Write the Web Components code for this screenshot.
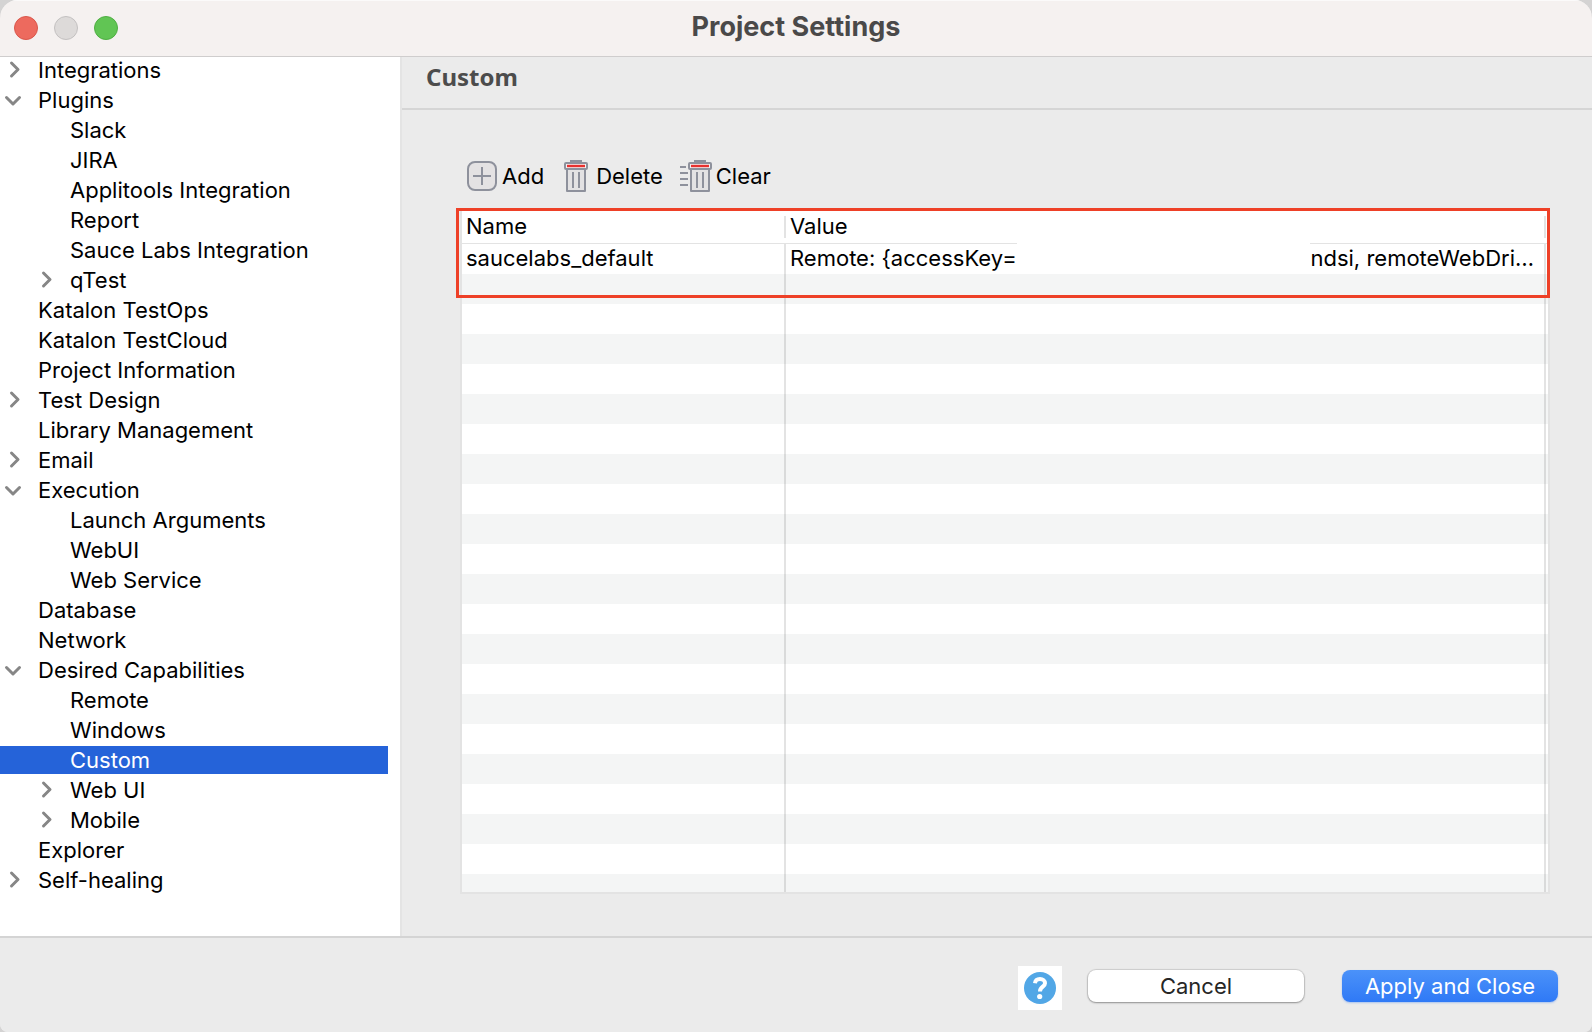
<!DOCTYPE html>
<html lang="en">
<head>
<meta charset="utf-8">
<title>Project Settings</title>
<style>
  html, body { margin: 0; height: 100%; }
  body { background: #d4d3d3; font-family: Inter, "Liberation Sans", sans-serif; font-size: 22px; line-height: 28px; color: #000; }
</style>
</head>
<body>
<settings-window>
  <title-bar slot="title">Project Settings</title-bar>
  <settings-tree slot="nav"></settings-tree>
  <settings-page slot="page" heading="Custom">
    <tool-bar>
      <tool-button icon="add">Add</tool-button>
      <tool-button icon="delete">Delete</tool-button>
      <tool-button icon="clear">Clear</tool-button>
    </tool-bar>
    <capability-table></capability-table>
  </settings-page>
  <dialog-footer slot="footer">
    <help-button></help-button>
    <push-button>Cancel</push-button>
    <push-button primary>Apply and Close</push-button>
  </dialog-footer>
</settings-window>

<script>
const define = (name, render) => customElements.define(name, class extends HTMLElement {
  constructor() { super(); this.attachShadow({ mode: 'open' }); }
  connectedCallback() { this.shadowRoot.innerHTML = render(this); }
});

define('settings-window', () => `
  <style>
    :host { display: flex; flex-direction: column; height: 100vh; background: #ebebeb; border-radius: 18px 18px 8px 8px; overflow: hidden; }
    .body { flex: 1; min-height: 0; display: flex; }
    ::slotted([slot=page]) { flex: 1; min-width: 0; }
  </style>
  <slot name="title"></slot>
  <div class="body"><slot name="nav"></slot><slot name="page"></slot></div>
  <slot name="footer"></slot>`);

define('title-bar', () => `
  <style>
    :host { display: grid; grid-template-columns: 1fr auto 1fr; align-items: center; height: 56px; flex: none; padding: 0 14px; box-sizing: border-box; background: #f5f1f0; box-shadow: inset 0 1px #fbfafa, 0 1px #cfcdcd; position: relative; z-index: 1; }
    .lights { display: flex; gap: 16px; }
    button { width: 24px; height: 24px; padding: 0; border-radius: 50%; border: 1px solid; }
    .close { background: #ed6a5e; border-color: #d9574b; }
    .min { background: #dddad9; border-color: #c3c0c0; }
    .zoom { background: #61c554; border-color: #4fae43; }
    h1 { margin: 0; padding-bottom: 2px; font-size: 27px; line-height: 32px; font-weight: 700; color: #4a4949; }
  </style>
  <div class="lights">
    <button class="close" aria-label="Close"></button>
    <button class="min" aria-label="Minimize"></button>
    <button class="zoom" aria-label="Zoom"></button>
  </div>
  <h1><slot></slot></h1>`);

const TREE = [
  ['Integrations', 'closed'],
  ['Plugins', 'open', [['Slack'], ['JIRA'], ['Applitools Integration'], ['Report'], ['Sauce Labs Integration'], ['qTest', 'closed']]],
  ['Katalon TestOps'], ['Katalon TestCloud'], ['Project Information'],
  ['Test Design', 'closed'], ['Library Management'], ['Email', 'closed'],
  ['Execution', 'open', [['Launch Arguments'], ['WebUI'], ['Web Service']]],
  ['Database'], ['Network'],
  ['Desired Capabilities', 'open', [['Remote'], ['Windows'], ['Custom', 'selected'], ['Web UI', 'closed'], ['Mobile', 'closed']]],
  ['Explorer'], ['Self-healing', 'closed'],
];
const branch = (items, level) => items.map(([label, state, kids]) => `
  <tree-item level="${level}" ${state || ''}>${label}</tree-item>${kids ? branch(kids, level + 1) : ''}`).join('');

define('settings-tree', () => `
  <style>
    :host { display: block; box-sizing: border-box; width: 402px; flex: none; padding-right: 12px; background: #fff; border-right: 2px solid #e4e4e4; overflow: hidden; }
    nav { display: flex; flex-direction: column; gap: 2px; }
  </style>
  <nav aria-label="Settings">${branch(TREE, 0)}</nav>`);

define('tree-item', el => {
  const arrow = el.hasAttribute('open') ? 'M6.5 11.5 13 18 19.5 11.5' : 'M11.5 7 18 13.5 11.5 20';
  const has = el.hasAttribute('open') || el.hasAttribute('closed');
  return `
  <style>
    :host { display: flex; height: 28px; }
    :host([level="1"]) { padding-left: 32px; }
    :host([selected]) { background: #2563d9; color: #fff; }
    .toggle { width: 38px; height: 28px; padding: 0; border: 0; background: none; text-align: left; flex: none; }
    svg { display: block; }
    a { color: inherit; text-decoration: none; white-space: nowrap; }
  </style>
  ${has ? `<button class="toggle" aria-label="Toggle"><svg width="28" height="28" fill="none" stroke="#868686" stroke-width="3" stroke-linecap="round" stroke-linejoin="round"><path d="${arrow}"/></svg></button>` : '<span class="toggle"></span>'}
  <a href="#"><slot></slot></a>`;
});

define('settings-page', el => `
  <style>
    :host { display: flex; flex-direction: column; background: #ebebeb; }
    header { flex: none; height: 52px; padding: 0 24px; border-bottom: 2px solid #d5d5d5; }
    h2 { margin: 0; padding-top: 5px; font: 700 24px/32px "Noto Sans", sans-serif; color: #4c4c4c; }
    .content { flex: 1; min-height: 0; display: flex; flex-direction: column; gap: 17px; padding: 50px 42px 42px 58px; }
  </style>
  <header><h2>${el.getAttribute('heading')}</h2></header>
  <div class="content"><slot></slot></div>`);

define('tool-bar', () => `
  <style>:host { display: flex; flex: none; gap: 20px; padding-left: 7px; }</style><slot></slot>`);

const can = x => `
  <g transform="translate(${x} 0)" fill="none" stroke="#8e919c" stroke-width="2">
    <path d="M7 2V1H17V2" fill="#8e919c"/>
    <path d="M3 8V31H21V8" fill="#e3e2e3" stroke-linejoin="round"/>
    <path d="M3 31H21M9 12V28M15 12V28"/>
    <rect x="1" y="3" width="22" height="6" rx="1" fill="#f3f0f1"/>
    <path d="M3 6H21" stroke="#e8312f" stroke-width="2.4"/>
  </g>`;
const ICONS = {
  add: [30, `<rect x="1" y="2" width="28" height="28" rx="7" fill="#e4e2e3" stroke="#8e919c" stroke-width="2"/><path d="M6 16H24M15 7V25" stroke="#8e919c" stroke-width="2"/>`],
  delete: [24, can(0)],
  clear: [32, `<path d="M0 7H6M0 13H8M0 19H8M0 25H8" stroke="#8e919c" stroke-width="2"/>${can(8)}`],
};
define('tool-button', el => {
  const [w, art] = ICONS[el.getAttribute('icon')];
  return `
  <style>
    :host { display: block; }
    :host([icon=delete]) { --gap: 8px; }
    :host([icon=clear]) { --gap: 4px; margin-left: -3px; }
    button { display: flex; align-items: center; gap: var(--gap, 5px); height: 32px; padding: 0; border: 0; background: none; font: inherit; color: inherit; }
  </style>
  <button><svg width="${w}" height="32" viewBox="0 0 ${w} 32">${art}</svg><span><slot></slot></span></button>`;
});

define('capability-table', () => `
  <style>
    :host { display: flex; flex: 1; min-height: 0; position: relative; }
    .frame { flex: 1; box-sizing: border-box; border: 2px solid #e3e3e3; border-top-width: 1px; background: #fff; overflow: hidden; }
    table { width: 100%; table-layout: fixed; border-collapse: separate; border-spacing: 0; }
    .name { width: 324px; }
    .edge { width: 2px; }
    th, td { box-sizing: border-box; padding: 0 0 2px 4px; text-align: left; font-weight: 400; white-space: nowrap; }
    th { height: 34px; border-bottom: 1px solid #e3e3e3; background: linear-gradient(#e3e3e3, #e3e3e3) right 6px / 2px 22px no-repeat; }
    td { height: 30px; border-right: 2px solid rgba(0, 0, 0, .11); }
    th:last-child { background: none; padding: 0; }
    td:last-child { border: 0; padding: 0; }
    tbody tr:nth-child(even) { background: #f4f5f5; }
    .value { display: flex; padding-right: 10px; }
    .blank { flex: 1; height: 28px; background: #fff; position: relative; }
    .blank::before { content: ""; position: absolute; inset: -2px 0 0; background: #fff; }
    .mark { position: absolute; left: -4px; right: 0; top: -1px; height: 90px; box-sizing: border-box; border: 3px solid #ee4027; pointer-events: none; }
  </style>
  <div class="frame">
    <table>
      <colgroup><col class="name"><col><col class="edge"></colgroup>
      <thead><tr><th scope="col">Name</th><th scope="col">Value</th><th></th></tr></thead>
      <tbody>
        <tr><td>saucelabs_default</td><td><div class="value"><span>Remote: {accessKey=</span><span class="blank"></span><span>ndsi, remoteWebDri…</span></div></td><td></td></tr>
        ${'<tr><td></td><td></td><td></td></tr>'.repeat(21)}
      </tbody>
    </table>
  </div>
  <div class="mark"></div>`);

define('dialog-footer', () => `
  <style>
    :host { display: flex; align-items: flex-start; justify-content: flex-end; flex: none; box-sizing: border-box; height: 96px; padding: 28px 34px 0 0; border-top: 2px solid #d4d4d4; background: #ebebeb; }
  </style><slot></slot>`);

define('help-button', () => `
  <style>
    :host { display: block; margin-right: 26px; }
    button { display: block; width: 44px; height: 44px; padding: 6px; border: 0; background: #fff; }
    svg { display: block; }
  </style>
  <button aria-label="Help"><svg width="32" height="32" viewBox="0 0 32 32"><circle cx="16" cy="16" r="16" fill="#52a7e6"/><path d="M11 11.2C11.3 8.2 13.2 7 16 7C19 7 21 8.7 21 11.2C21 14.8 16 14.6 16 19.4" fill="none" stroke="#fff" stroke-width="4"/><circle cx="15.7" cy="24.5" r="2.6" fill="#fff"/></svg></button>`);

define('push-button', () => `
  <style>
    :host { display: block; width: 216px; margin-top: 4px; }
    :host([primary]) { margin-left: 38px; }
    button { display: block; width: 100%; height: 32px; padding: 0; border: 0; border-radius: 8px; font: inherit; color: #262626; background: #fff; box-shadow: 0 0 1px 1px rgba(0, 0, 0, .12), 0 1px 2px rgba(0, 0, 0, .3); }
    :host([primary]) button { color: #fff; background: linear-gradient(#4b92f9, #2f79f6); box-shadow: 0 1px 2px rgba(47, 121, 246, .35); }
  </style>
  <button><slot></slot></button>`);
</script>
</body>
</html>
